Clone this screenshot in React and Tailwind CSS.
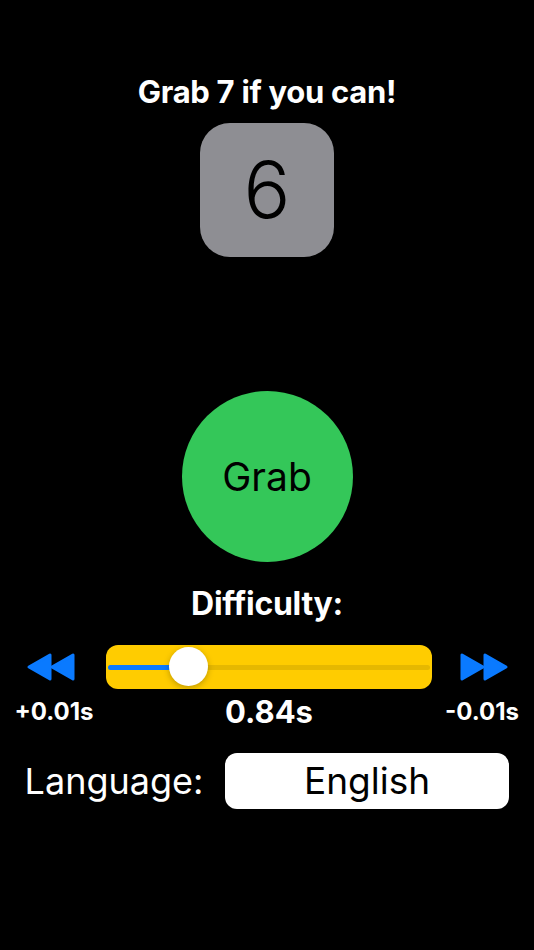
import React from "react";

function Rewind() {
  return (
    <svg width="50" height="30" viewBox="0 0 50 30" className="block">
      <path d="M24 3 L24 27 L3 15 Z" fill="#0a7aff" stroke="#0a7aff" strokeWidth="3" strokeLinejoin="round" />
      <path d="M47 3 L47 27 L26 15 Z" fill="#0a7aff" stroke="#0a7aff" strokeWidth="3" strokeLinejoin="round" />
    </svg>
  );
}

function Forward() {
  return (
    <svg width="50" height="30" viewBox="0 0 50 30" className="block">
      <path d="M3 3 L3 27 L24 15 Z" fill="#0a7aff" stroke="#0a7aff" strokeWidth="3" strokeLinejoin="round" />
      <path d="M26 3 L26 27 L47 15 Z" fill="#0a7aff" stroke="#0a7aff" strokeWidth="3" strokeLinejoin="round" />
    </svg>
  );
}

export default function App() {
  return (
    <div
      className="w-[534px] h-[950px] bg-black text-white flex flex-col items-center"
      style={{ fontFamily: "Inter, 'Noto Sans', sans-serif" }}
    >
      <div className="mt-[74px] text-[31px] font-bold leading-[36px] tracking-[-0.3px]">Grab 7 if you can!</div>
      <div className="mt-[13px] w-[134px] h-[134px] rounded-[30px] bg-[#8e8e93] flex items-center justify-center text-black text-[78px] font-light leading-none">
        6
      </div>
      <button className="mt-[134px] w-[171px] h-[171px] rounded-full bg-[#34c759] flex items-center justify-center text-black text-[39px] leading-none">
        Grab
      </button>
      <div className="mt-[24px] text-[32px] font-bold leading-[36px] tracking-[-0.3px]">Difficulty:</div>
      <div className="mt-[23px] w-full flex items-center">
        <div className="w-[106px] flex justify-center pr-[5px] pb-[1px]">
          <Rewind />
        </div>
        <div className="w-[326px] h-[44px] rounded-[12px] bg-[#ffcc00] relative flex items-center px-[2px]">
          <div className="w-full h-[5px] rounded-full bg-[#e6b800] relative">
            <div className="absolute left-0 top-0 h-[5px] w-[80px] rounded-full bg-[#0a7aff]" />
          </div>
          <div className="absolute left-[63px] top-[2px] w-[39px] h-[39px] rounded-full bg-white shadow-[0_2px_6px_rgba(0,0,0,0.25)]" />
        </div>
        <div className="flex-1 flex justify-center pl-[2px] pb-[1px]">
          <Forward />
        </div>
      </div>
      <div className="mt-[6px] w-full flex items-center">
        <div className="w-[108px] text-center text-[24px] font-bold leading-[28px]">+0.01s</div>
        <div className="w-[322px] text-center text-[31px] font-bold leading-[34px]">0.84s</div>
        <div className="flex-1 text-center text-[24px] font-bold leading-[28px]">-0.01s</div>
      </div>
      <div className="mt-[24px] w-full flex items-center">
        <div className="w-[225px] text-center text-[36px] leading-[56px] pl-[3px]">Language:</div>
        <div className="w-[284px] h-[56px] rounded-[12px] bg-white text-black flex items-center justify-center text-[37px]">
          English
        </div>
      </div>
    </div>
  );
}
